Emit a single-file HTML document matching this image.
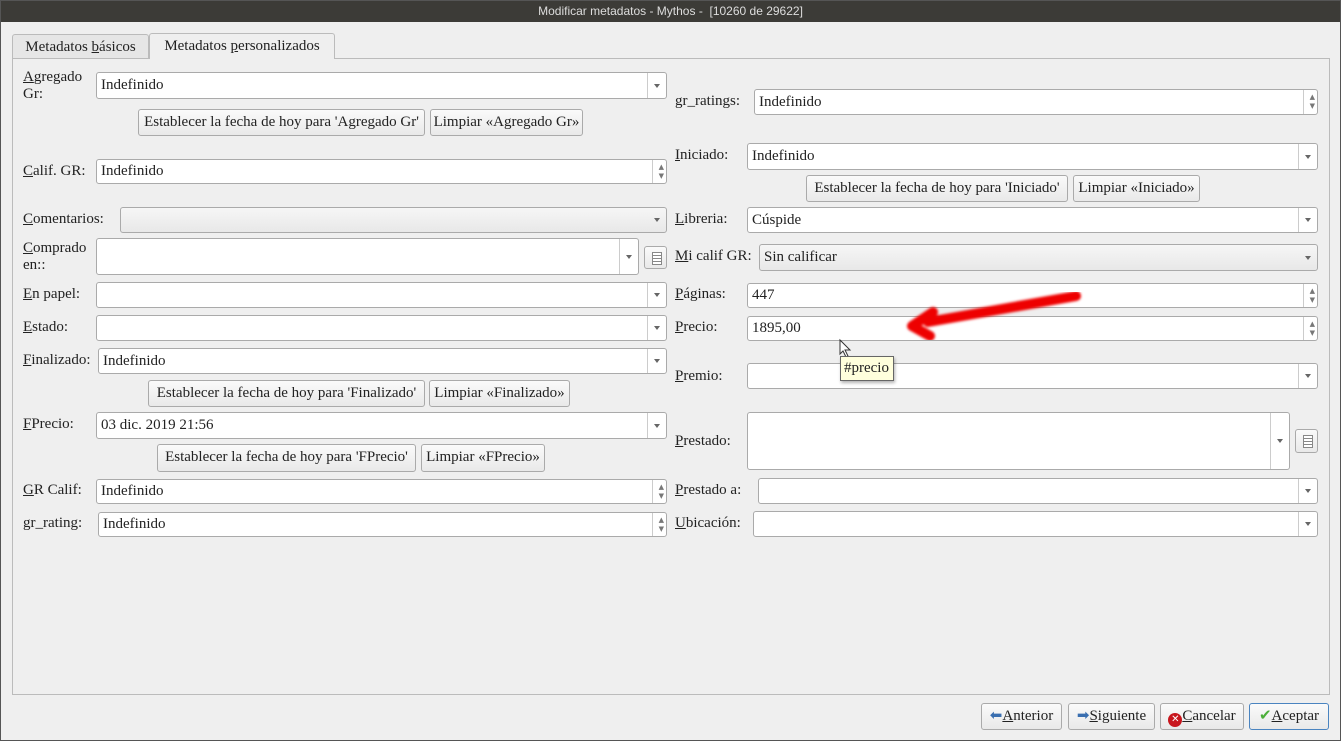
<!DOCTYPE html>
<html><head><meta charset="utf-8"><style>
*{box-sizing:border-box;margin:0;padding:0}
body{width:1341px;height:741px;background:#efefef;font-family:"Liberation Serif",serif;font-size:15px;color:#222;position:relative;overflow:hidden}
.a{position:absolute}
.frame{left:0;top:0;width:1341px;height:741px;border:1px solid #555;pointer-events:none;z-index:5}
.title{left:0;top:0;width:1341px;height:22px;background:#3c3b37;color:#ddd;font-family:"Liberation Sans",sans-serif;font-size:12px;text-align:center;line-height:22px}
.panel{left:12px;top:58px;width:1318px;height:637px;border:1px solid #bbb;background:#efefef}
.tab{top:34px;height:25px;border:1px solid #bbb;border-bottom:none;border-radius:3px 3px 0 0;line-height:24px;text-align:center;background:#e6e6e6}
.tab.on{background:#efefef;height:26px;top:33px;z-index:2}
.lbl{line-height:17px}
.in{border:1px solid #aaa;border-radius:3px;background:#fff;padding-left:4px;display:flex;align-items:center}
.cb::after{content:"";position:absolute;right:0;top:0;bottom:0;width:18px;border-left:1px solid #ccc}
.cb::before{content:"";position:absolute;right:6px;top:50%;margin-top:-2px;border-left:3px solid transparent;border-right:3px solid transparent;border-top:4px solid #666}
.cb.ro{background:linear-gradient(#f6f6f6,#e8e8e8)}
.cb.ro::after{display:none}
.sp::after{content:"";position:absolute;right:0;top:0;bottom:0;width:13px;border-left:1px solid #ccc}
.sp::before{content:"▲\A▼";white-space:pre;position:absolute;right:2px;top:50%;transform:translateY(-50%);font-size:7px;line-height:9px;color:#777;font-family:"DejaVu Sans",sans-serif}
.bt{border:1px solid #aaa;border-radius:3px;background:linear-gradient(#fafafa,#e9e9e9);text-align:center;line-height:25px;white-space:nowrap}
.ib{border:1px solid #aaa;border-radius:3px;background:linear-gradient(#fafafa,#e9e9e9)}
.ib::after{content:"";position:absolute;left:7px;top:5px;width:8px;height:11px;border:1px solid #888;background:repeating-linear-gradient(#fff 0 2px,#888 2px 3px)}
u{text-decoration:underline}
</style></head><body>
<div class="a frame"></div>
<div class="a title">Modificar metadatos - Mythos -&nbsp; [10260 de 29622]</div>
<div class="a tab" style="left:12px;width:137px">Metadatos <u>b</u>ásicos</div>
<div class="a tab on" style="left:149px;width:186px">Metadatos <u>p</u>ersonalizados</div>
<div class="a panel"></div>

<div class="a lbl" style="left:23px;top:69px"><u>A</u>gregado<br>Gr:</div>
<div class="a in cb" style="left:96px;top:72px;width:571px;height:27px">Indefinido</div>
<div class="a bt" style="left:138px;top:109px;width:287px;height:27px">Establecer la fecha de hoy para 'Agregado Gr'</div>
<div class="a bt" style="left:430px;top:109px;width:153px;height:27px">Limpiar «Agregado Gr»</div>

<div class="a lbl" style="left:23px;top:163px"><u>C</u>alif. GR:</div>
<div class="a in sp" style="left:96px;top:159px;width:571px;height:25px">Indefinido</div>

<div class="a lbl" style="left:23px;top:211px"><u>C</u>omentarios:</div>
<div class="a in cb ro" style="left:120px;top:207px;width:547px;height:26px"></div>

<div class="a lbl" style="left:23px;top:240px"><u>C</u>omprado<br>en::</div>
<div class="a in cb" style="left:96px;top:238px;width:543px;height:37px"></div>
<div class="a ib" style="left:644px;top:246px;width:23px;height:23px"></div>

<div class="a lbl" style="left:23px;top:286px"><u>E</u>n papel:</div>
<div class="a in cb" style="left:96px;top:282px;width:571px;height:26px"></div>
<div class="a lbl" style="left:23px;top:319px"><u>E</u>stado:</div>
<div class="a in cb" style="left:96px;top:315px;width:571px;height:26px"></div>
<div class="a lbl" style="left:23px;top:352px"><u>F</u>inalizado:</div>
<div class="a in cb" style="left:98px;top:348px;width:569px;height:26px">Indefinido</div>
<div class="a bt" style="left:148px;top:380px;width:277px;height:27px">Establecer la fecha de hoy para 'Finalizado'</div>
<div class="a bt" style="left:429px;top:380px;width:141px;height:27px">Limpiar «Finalizado»</div>
<div class="a lbl" style="left:23px;top:416px"><u>F</u>Precio:</div>
<div class="a in cb" style="left:96px;top:412px;width:571px;height:27px">03 dic. 2019 21:56</div>
<div class="a bt" style="left:157px;top:444px;width:259px;height:28px">Establecer la fecha de hoy para 'FPrecio'</div>
<div class="a bt" style="left:421px;top:444px;width:124px;height:28px">Limpiar «FPrecio»</div>
<div class="a lbl" style="left:23px;top:482px"><u>G</u>R Calif:</div>
<div class="a in sp" style="left:96px;top:479px;width:571px;height:25px">Indefinido</div>
<div class="a lbl" style="left:23px;top:515px">gr_rating:</div>
<div class="a in sp" style="left:98px;top:512px;width:569px;height:25px">Indefinido</div>

<div class="a lbl" style="left:675px;top:93px">gr_ratings:</div>
<div class="a in sp" style="left:754px;top:89px;width:564px;height:26px">Indefinido</div>
<div class="a lbl" style="left:675px;top:147px"><u>I</u>niciado:</div>
<div class="a in cb" style="left:747px;top:143px;width:571px;height:27px">Indefinido</div>
<div class="a bt" style="left:806px;top:175px;width:262px;height:27px">Establecer la fecha de hoy para 'Iniciado'</div>
<div class="a bt" style="left:1073px;top:175px;width:127px;height:27px">Limpiar «Iniciado»</div>
<div class="a lbl" style="left:675px;top:211px"><u>L</u>ibreria:</div>
<div class="a in cb" style="left:747px;top:207px;width:571px;height:26px">Cúspide</div>
<div class="a lbl" style="left:675px;top:248px"><u>M</u>i calif GR:</div>
<div class="a in cb ro" style="left:759px;top:244px;width:559px;height:27px">Sin calificar</div>
<div class="a lbl" style="left:675px;top:286px"><u>P</u>áginas:</div>
<div class="a in sp" style="left:747px;top:283px;width:571px;height:25px">447</div>
<div class="a lbl" style="left:675px;top:319px"><u>P</u>recio:</div>
<div class="a in sp" style="left:747px;top:316px;width:571px;height:25px">1895,00</div>
<div class="a lbl" style="left:675px;top:368px"><u>P</u>remio:</div>
<div class="a in cb" style="left:747px;top:363px;width:571px;height:26px"></div>
<div class="a lbl" style="left:675px;top:433px"><u>P</u>restado:</div>
<div class="a in cb" style="left:747px;top:412px;width:543px;height:58px"></div>
<div class="a ib" style="left:1295px;top:429px;width:23px;height:24px"></div>
<div class="a lbl" style="left:675px;top:482px"><u>P</u>restado a:</div>
<div class="a in cb" style="left:758px;top:478px;width:560px;height:26px"></div>
<div class="a lbl" style="left:675px;top:515px"><u>U</u>bicación:</div>
<div class="a in cb" style="left:753px;top:511px;width:565px;height:26px"></div>

<svg class="a" style="left:0;top:0;z-index:3" width="1341" height="741"><defs><filter id="b"><feGaussianBlur stdDeviation="1.2"/></filter></defs><g filter="url(#b)"><path d="M1076 296 L928 322" stroke="#e00" stroke-width="10" stroke-linecap="round" fill="none"/><path d="M933 312 L912 326 L930 336" stroke="#e00" stroke-width="10" stroke-linecap="round" stroke-linejoin="round" fill="none"/></g>
<path d="M840 340 L840 354 L843 351 L846 357 L848 356 L845 350 L850 350 Z" fill="#fff" stroke="#333" stroke-width="1"/></svg>
<div class="a" style="left:840px;top:356px;width:54px;height:25px;background:#ffffdc;border:1px solid #666;line-height:23px;padding-left:3px;box-shadow:1px 2px 3px rgba(0,0,0,.3);z-index:4">#precio</div>

<div class="a bt" style="left:981px;top:703px;width:81px;height:27px"><span style="color:#3a6fb0">⬅</span><u>A</u>nterior</div>
<div class="a bt" style="left:1068px;top:703px;width:87px;height:27px"><span style="color:#3a6fb0">➡</span><u>S</u>iguiente</div>
<div class="a bt" style="left:1160px;top:703px;width:84px;height:27px"><span style="display:inline-block;width:14px;height:14px;border-radius:50%;background:#c8161d;color:#fff;font-size:10px;line-height:14px;vertical-align:-2px;font-family:'DejaVu Sans'">✕</span><u>C</u>ancelar</div>
<div class="a bt" style="left:1249px;top:703px;width:80px;height:27px;border-color:#4a84c0"><span style="color:#4caf3a">✔</span><u>A</u>ceptar</div>
</body></html>
